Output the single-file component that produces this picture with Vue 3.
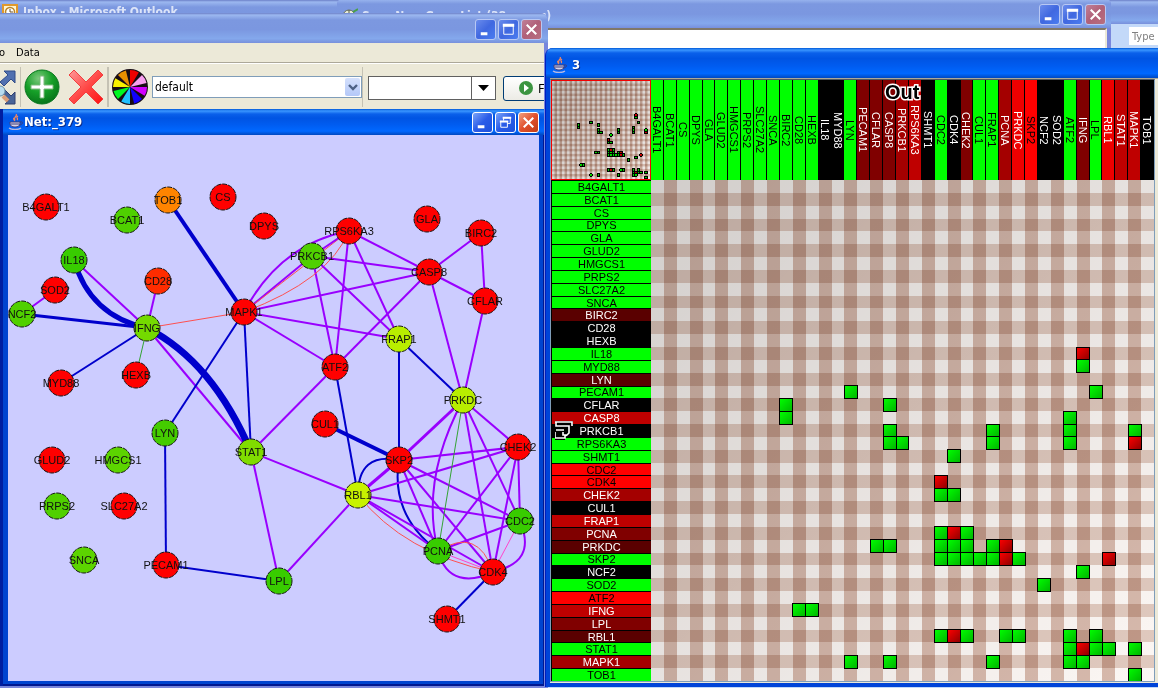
<script setup>
const genes = [
  'B4GALT1', 'BCAT1', 'CS', 'DPYS', 'GLA', 'GLUD2', 'HMGCS1', 'PRPS2', 'SLC27A2', 'SNCA',
  'BIRC2', 'CD28', 'HEXB', 'IL18', 'MYD88', 'LYN', 'PECAM1', 'CFLAR', 'CASP8', 'PRKCB1',
  'RPS6KA3', 'SHMT1', 'CDC2', 'CDK4', 'CHEK2', 'CUL1', 'FRAP1', 'PCNA', 'PRKDC', 'SKP2',
  'NCF2', 'SOD2', 'ATF2', 'IFNG', 'LPL', 'RBL1', 'STAT1', 'MAPK1', 'TOB1'
]

// Expression levels: g = up, k = none, 1..5 = increasing red, r = full red
const rowLevels = 'ggggggggggBkkggBgk4kggrr3k42BgkgrA2Bg3g'
const colLevels = 'gggggggggggggkkg22234kgk2gg35rkkg2g544k'
const tones = {
  g: '#00ff00', k: '#000000', B: '#5a0000', 2: '#800000', 3: '#a40000',
  4: '#bf0000', A: '#bf0000', 5: '#ee0000', r: '#ff0000'
}
const toLabel = (levels) => genes.map((name, i) => ({
  name,
  bg: tones[levels[i]],
  fg: levels[i] === 'g' || levels[i] === 'r' ? '#000' : '#fff'
}))
const rows = toLabel(rowLevels)
const cols = toLabel(colLevels)

// Row index -> columns; a negative number marks a red cell
const matrix = {
  13: [-33], 14: [33], 16: [15, 34], 17: [10, 18], 18: [10, 32], 19: [18, 26, 32, 37],
  20: [18, 19, 26, 32, -37], 21: [23], 23: [-22], 24: [22, 23], 27: [22, -23, 24],
  28: [17, 18, 22, 23, 24, 26, -27], 29: [22, 23, 24, 25, 26, -27, 28, -35], 30: [33],
  31: [30], 33: [11, 12], 35: [22, -23, 24, 27, 28, 32, 34], 36: [32, -33, 34, 35, 37],
  37: [15, 18, 26, 32, 33], 38: [37]
}
const cells = Object.entries(matrix).flatMap(([r, list]) =>
  list.map((c) => ({ x: Math.abs(c), y: Number(r), red: c < 0 }))
)
const odd = Array.from({ length: 19 }, (_, i) => i * 2 + 1)

const R = '#ff0000'
const nodes = {
  B4GALT1: [46, 207, R], BCAT1: [127, 220, '#4fd000'], TOB1: [168, 200, '#ff8400'],
  CS: [223, 197, R], DPYS: [264, 226, R], IL18: [74, 260, '#38cc00'],
  CD28: [158, 281, '#ff2c00'], SOD2: [55, 290, R], NCF2: [22, 314, '#50d000'],
  IFNG: [147, 328, '#74da00'], MAPK1: [244, 312, R], HEXB: [136, 375, R],
  MYD88: [61, 383, R], RPS6KA3: [349, 231, R], PRKCB1: [312, 256, '#50d000'],
  GLA: [427, 219, R], BIRC2: [481, 233, R], CASP8: [429, 272, R], CFLAR: [485, 301, R],
  FRAP1: [399, 339, '#b8ee00'], ATF2: [335, 367, R], PRKDC: [463, 400, '#b8ee00'],
  CUL1: [325, 424, R], SKP2: [399, 460, R], CHEK2: [518, 447, R],
  RBL1: [358, 495, '#c8f200'], CDC2: [520, 521, '#38cc00'], PCNA: [438, 551, '#38cc00'],
  CDK4: [493, 572, R], SHMT1: [447, 619, R], LYN: [165, 433, '#44cc00'],
  STAT1: [251, 452, '#80dc00'], GLUD2: [52, 460, R], HMGCS1: [118, 460, '#5cd400'],
  PRPS2: [57, 506, '#50d000'], SLC27A2: [124, 506, R], SNCA: [84, 560, '#5cd400'],
  PECAM1: [166, 565, R], LPL: [279, 581, '#38cc00']
}
const ink = { p: '#9900ff', b: '#0000cc', r: '#ff5050', g: '#33a333', m: '#ff44cc' }
// from, to, ink, width, optional control points of a curve
const links = [
  ['TOB1', 'MAPK1', 'b', 4], ['IL18', 'IFNG', 'p', 2], ['IL18', 'IFNG', 'b', 5, 'Q 90 316'],
  ['NCF2', 'SOD2', 'p', 2], ['NCF2', 'IFNG', 'b', 3], ['CD28', 'IFNG', 'p', 2],
  ['IFNG', 'MAPK1', 'r', 1], ['IFNG', 'HEXB', 'g', 1], ['MYD88', 'IFNG', 'b', 2],
  ['IFNG', 'STAT1', 'p', 2], ['IFNG', 'STAT1', 'b', 7, 'Q 213 362'],
  ['MAPK1', 'LYN', 'b', 2], ['MAPK1', 'STAT1', 'b', 2], ['LYN', 'PECAM1', 'b', 2],
  ['PECAM1', 'LPL', 'b', 2], ['STAT1', 'LPL', 'p', 2], ['STAT1', 'ATF2', 'p', 2],
  ['STAT1', 'RBL1', 'p', 2], ['RBL1', 'LPL', 'p', 2], ['RBL1', 'ATF2', 'b', 2],
  ['ATF2', 'MAPK1', 'p', 2], ['ATF2', 'PRKCB1', 'p', 2], ['ATF2', 'RPS6KA3', 'p', 2],
  ['ATF2', 'CASP8', 'p', 2], ['MAPK1', 'CASP8', 'p', 2], ['MAPK1', 'FRAP1', 'p', 2],
  ['MAPK1', 'PRKCB1', 'p', 2], ['RPS6KA3', 'MAPK1', 'p', 2, 'Q 280 244'],
  ['MAPK1', 'RPS6KA3', 'r', 1], ['MAPK1', 'RPS6KA3', 'r', 1, 'Q 329 280'],
  ['PRKCB1', 'RPS6KA3', 'p', 2], ['PRKCB1', 'CASP8', 'p', 2], ['PRKCB1', 'FRAP1', 'p', 2],
  ['RPS6KA3', 'CASP8', 'p', 2], ['RPS6KA3', 'FRAP1', 'p', 2], ['CASP8', 'BIRC2', 'p', 2],
  ['CASP8', 'CFLAR', 'p', 2], ['BIRC2', 'CFLAR', 'p', 2], ['CASP8', 'PRKDC', 'p', 2],
  ['CFLAR', 'PRKDC', 'p', 2], ['FRAP1', 'PRKDC', 'b', 2], ['FRAP1', 'SKP2', 'b', 2],
  ['CUL1', 'SKP2', 'b', 4], ['SKP2', 'PRKDC', 'p', 3], ['SKP2', 'RBL1', 'p', 3],
  ['SKP2', 'RBL1', 'b', 2, 'Q 358 452'], ['SKP2', 'PCNA', 'b', 2, 'Q 390 515'],
  ['SKP2', 'CHEK2', 'p', 2], ['SKP2', 'CDC2', 'p', 2], ['SKP2', 'CDK4', 'p', 2],
  ['SKP2', 'PCNA', 'p', 2], ['RBL1', 'CHEK2', 'p', 2], ['RBL1', 'CDC2', 'p', 2],
  ['RBL1', 'PCNA', 'p', 2], ['RBL1', 'CDK4', 'p', 2], ['RBL1', 'CDK4', 'r', 1, 'Q 404 553'],
  ['PRKDC', 'CHEK2', 'p', 2], ['PRKDC', 'CDC2', 'p', 2], ['PRKDC', 'CDK4', 'p', 2],
  ['PRKDC', 'PCNA', 'g', 1], ['PRKDC', 'PCNA', 'p', 2, 'Q 420 480'],
  ['CHEK2', 'PCNA', 'p', 2], ['CHEK2', 'CDK4', 'p', 2], ['CHEK2', 'CDC2', 'p', 2],
  ['PCNA', 'CDC2', 'p', 2], ['PCNA', 'CDK4', 'm', 1],
  ['PCNA', 'CDK4', 'p', 2, 'C 446 582 470 583'], ['PCNA', 'CDK4', 'r', 1, 'Q 478 526'],
  ['CDC2', 'CDK4', 'm', 1], ['CDC2', 'CDK4', 'p', 2, 'C 532 550 522 565'],
  ['CDK4', 'SHMT1', 'b', 2]
]
const edges = links.map(([a, b, tone, width, bend]) => ({
  d: `M ${nodes[a][0]} ${nodes[a][1]} ${bend || 'L'} ${nodes[b][0]} ${nodes[b][1]}`,
  stroke: ink[tone],
  width
}))

const hues = ['#f00000', '#f8a0f0', '#d000ff', '#1000ff', '#20c0ff', '#00f820', '#f8f000', '#e89000']
const wedges = hues.map((fill, i) => {
  const at = (deg) => {
    const t = (deg * Math.PI) / 180
    return `${(18 + 17 * Math.sin(t)).toFixed(1)} ${(18 - 17 * Math.cos(t)).toFixed(1)}`
  }
  const start = i * 45
  return { fill, d: `M18 18 L${at(start)} A17 17 0 0 1 ${at(start + 31)} Z` }
})
</script>

<template>
  <main class="desktop">
    <svg class="defs" width="0" height="0" aria-hidden="true">
      <defs>
        <linearGradient id="shade" x1="0" y1="0" x2="1" y2="1">
          <stop offset="0" stop-color="#000" stop-opacity="0.17" />
          <stop offset="1" stop-color="#000" stop-opacity="0" />
        </linearGradient>
        <linearGradient id="up" x1="0" y1="0" x2="1" y2="1">
          <stop offset="0" stop-color="#00ff00" /><stop offset="1" stop-color="#00b400" />
        </linearGradient>
        <linearGradient id="down" x1="0" y1="0" x2="1" y2="1">
          <stop offset="0" stop-color="#ff0000" /><stop offset="1" stop-color="#8c0000" />
        </linearGradient>
        <radialGradient id="orb" cx="0.4" cy="0.25" r="0.8">
          <stop offset="0" stop-color="#7cc87c" /><stop offset="0.5" stop-color="#16a028" /><stop offset="1" stop-color="#067018" />
        </radialGradient>
        <linearGradient id="cross" x1="0" y1="0" x2="1" y2="1">
          <stop offset="0" stop-color="#ff9a9a" /><stop offset="0.5" stop-color="#ff4a48" /><stop offset="1" stop-color="#ff1010" />
        </linearGradient>
        <symbol id="java" viewBox="0 0 16 16">
          <path d="M8 0c2 2-3 3-1 6M10 2c-3 2 1 2-1 4M6 4c-1 1 0 2 1 3" fill="none" stroke="#f08860" stroke-width="1.2" />
          <path d="M2 8h10v1c0 3-2 4-5 4S2 12 2 9z" fill="#d8d4e8" stroke="#3c3c7c" />
          <path d="M3 10h8M12 8c4-1 3 3-1 3" fill="none" stroke="#3c3c7c" />
          <path d="M1 14c3 2 9 2 12 0" fill="none" stroke="#b8b8e0" stroke-width="1.4" />
        </symbol>
        <symbol id="w-min" viewBox="0 0 20 20"><path d="M5 13h7v3H5z" fill="#fff" /></symbol>
        <symbol id="w-max" viewBox="0 0 20 20">
          <path d="M5 6h10v9H5z" fill="none" stroke="#fff" /><path d="M4 4h12v3H4z" fill="#fff" />
        </symbol>
        <symbol id="w-restore" viewBox="0 0 20 20">
          <path d="M8 8V5h7v6h-3M5 9h7v6H5z" fill="none" stroke="#fff" /><path d="M7 4h9v2H7zM4 8h9v2H4z" fill="#fff" />
        </symbol>
        <symbol id="w-close" viewBox="0 0 20 20"><path d="M5 5l10 10M15 5L5 15" stroke="#fff" stroke-width="2.2" /></symbol>
        <g id="gingham">
          <rect width="39" height="39" fill="#fcf7f4" />
          <rect v-for="i in odd" :key="'c' + i" class="mul" :x="i" width="1" height="39" fill="#dabfb4" />
          <rect v-for="i in odd" :key="'r' + i" class="mul" :y="i" width="39" height="1" fill="#e4d1c8" />
          <rect width="39" height="39" fill="url(#shade)" />
          <rect
            v-for="c in cells" :key="c.x + '-' + c.y" class="cell" :x="c.x" :y="c.y" width="1" height="1"
            :fill="c.red ? 'url(#down)' : 'url(#up)'"
          />
        </g>
      </defs>
    </svg>

    <!-- Mail window, furthest back -->
    <section class="win mail">
      <header class="bar faded mail-bar">
        <svg class="ico" viewBox="0 0 16 16">
          <rect x="1" y="1" width="14" height="14" fill="#fff4d0" stroke="#e0992c" stroke-width="2" />
          <circle cx="8" cy="8" r="4.5" fill="#fff" stroke="#b88428" stroke-width="1.5" /><path d="M8 5v3h3" fill="none" stroke="#705020" />
        </svg>
        <h2 class="cap small">Inbox - Microsoft Outlook</h2>
      </header>
      <div class="mail-tools"><input class="ask" type="text" placeholder="Type a question" aria-label="Type a question" /></div>
    </section>

    <!-- Gene list window -->
    <section class="win list">
      <header class="bar faded list-bar">
        <div class="name">
          <svg class="ico" viewBox="0 0 16 16">
            <circle cx="7" cy="8" r="6" fill="#e8ecd8" stroke="#687058" /><path d="M3 6h8M7 2v11M3 10h8" stroke="#505848" fill="none" /><path d="M11 4l5-3" stroke="#48a048" stroke-width="2" />
          </svg>
          <h2 class="cap small">Save New Gene List (38 genes)</h2>
        </div>
        <div class="keys">
          <button class="key dim" aria-label="Minimize"><svg viewBox="0 0 20 20"><use href="#w-min" /></svg></button>
          <button class="key dim" aria-label="Maximize"><svg viewBox="0 0 20 20"><use href="#w-max" /></svg></button>
          <button class="key dim shut" aria-label="Close"><svg viewBox="0 0 20 20"><use href="#w-close" /></svg></button>
        </div>
      </header>
      <div class="list-body"></div>
    </section>

    <!-- Network application -->
    <section class="win app">
      <header class="bar faded app-bar">
        <div class="keys">
          <button class="key dim" aria-label="Minimize"><svg viewBox="0 0 20 20"><use href="#w-min" /></svg></button>
          <button class="key dim" aria-label="Maximize"><svg viewBox="0 0 20 20"><use href="#w-max" /></svg></button>
          <button class="key dim shut" aria-label="Close"><svg viewBox="0 0 20 20"><use href="#w-close" /></svg></button>
        </div>
      </header>
      <nav class="menu"><button>o</button><button>Data</button></nav>
      <div class="tools">
        <button class="tool zoomer" aria-label="Zoom to fit">
          <svg width="16" height="36" viewBox="0 0 16 36">
            <path d="M4 2h11v12l-4-4-7 7-4-4 8-7z" fill="#5070b0" stroke="#304c88" />
            <path d="M15 35H5l4-4-9-9 3-3 8 8 4-4z" fill="#486498" stroke="#304070" />
            <circle cx="0" cy="22" r="5" fill="#b8dcf0" stroke="#6c90a8" /><path d="M3 27l5 5" stroke="#d89c78" stroke-width="4" />
          </svg>
        </button>
        <i class="rule"></i>
        <button class="tool" aria-label="Add">
          <svg width="36" height="36" viewBox="0 0 36 36">
            <circle cx="18" cy="18" r="17" fill="url(#orb)" stroke="#0a7820" />
            <path d="M16 7h4v9h9v4h-9v9h-4v-9H7v-4h9z" fill="#fff" stroke="#78b878" />
          </svg>
        </button>
        <button class="tool" aria-label="Delete">
          <svg width="36" height="36" viewBox="0 0 36 36">
            <path d="M6 1l12 12L30 1l5 5-12 12 12 12-5 5-12-12L6 35l-5-5 12-12L1 6z" fill="url(#cross)" stroke="#f04040" />
          </svg>
        </button>
        <i class="rule thick"></i>
        <button class="tool" aria-label="Colours">
          <svg width="36" height="36" viewBox="0 0 36 36">
            <circle cx="18" cy="18" r="18" fill="#180c14" />
            <path v-for="w in wedges" :key="w.fill" :d="w.d" :fill="w.fill" />
          </svg>
        </button>
        <div class="pick">
          <select aria-label="Visual style"><option>default</option></select>
          <svg class="drop" viewBox="0 0 15 18"><path d="M4 7l4 4 4-4" fill="none" stroke="#4d6185" stroke-width="2.4" /></svg>
        </div>
        <i class="rule"></i>
        <div class="combo">
          <input type="text" aria-label="Search" />
          <button aria-label="Show choices"><svg width="11" height="6" viewBox="0 0 11 6"><path d="M0 0h11L5.500 6z" /></svg></button>
        </div>
        <button class="find">
          <svg width="14" height="14" viewBox="0 0 14 14"><circle cx="7" cy="7" r="7" fill="#3c9440" /><path d="M5 3l5 4-5 4z" fill="#fff" /></svg>
          Find
        </button>
      </div>

      <section class="net">
        <header class="bar live net-bar">
          <svg class="ico"><use href="#java" /></svg>
          <h2 class="cap">Net:_379</h2>
          <div class="keys">
            <button class="key" aria-label="Minimize"><svg viewBox="0 0 20 20"><use href="#w-min" /></svg></button>
            <button class="key" aria-label="Restore"><svg viewBox="0 0 20 20"><use href="#w-restore" /></svg></button>
            <button class="key shut" aria-label="Close"><svg viewBox="0 0 20 20"><use href="#w-close" /></svg></button>
          </div>
        </header>
        <svg class="graph" viewBox="8 135 531 546" preserveAspectRatio="xMinYMin meet">
          <path v-for="(e, i) in edges" :key="i" :d="e.d" :stroke="e.stroke" :stroke-width="e.width" fill="none" />
          <g v-for="(n, name) in nodes" :key="name">
            <circle :cx="n[0]" :cy="n[1]" r="13" :fill="n[2]" class="rim" />
            <text :x="n[0]" :y="n[1] + 4">{{ name }}</text>
          </g>
        </svg>
      </section>
    </section>

    <!-- Matrix window -->
    <section class="win heat">
      <header class="bar live heat-bar">
        <svg class="ico"><use href="#java" /></svg>
        <h2 class="cap">3</h2>
      </header>
      <div class="heat-body">
        <div class="board">
          <svg class="mini" viewBox="0 0 39 39" preserveAspectRatio="none"><use href="#gingham" /></svg>
          <ul class="cols">
            <li v-for="c in cols" :key="c.name" :style="{ background: c.bg, color: c.fg }">{{ c.name }}</li>
          </ul>
          <ul class="rows">
            <li v-for="r in rows" :key="r.name" :style="{ background: r.bg, color: r.fg }">{{ r.name }}</li>
          </ul>
          <svg class="map" viewBox="0 0 39 39" preserveAspectRatio="none"><use href="#gingham" /></svg>
          <span class="out">Out</span>
          <svg class="in" viewBox="0 0 18 19" role="img" aria-label="In">
            <path d="M0 0h18v5h-3v10H10v4H0z" fill="#000" />
            <path d="M0 1h17v4M1 1v4h13v7l-2 2H8v-3M1 9h8M0 11v6h10v-2l2-1" fill="none" stroke="#fff" stroke-width="1.6" />
          </svg>
        </div>
      </div>
    </section>
  </main>
</template>

<style>
html, body { margin: 0; background: #ece9d8; overflow: hidden; }
</style>

<style scoped>
.desktop {
  position: relative;
  height: 100vh;
  overflow: hidden;
  font-family: "DejaVu Sans Condensed", "DejaVu Sans", sans-serif;
  font-stretch: condensed;
  font-size: 11px;
}
.desktop * { box-sizing: border-box; }
.defs { position: absolute; }
button, input, select { font: inherit; margin: 0; }
.win { position: absolute; display: flex; flex-direction: column; overflow: hidden; }
.bar { display: flex; align-items: center; flex: none; }
.faded { background: linear-gradient(#6c80c8 0, #9cb8f0 2px, #7c98e0 7px, #7b97e0 55%, #84a8ec 85%, #7890dc); }
.live { background: linear-gradient(#0058d8 0, #3a96ff 2px, #0a60ea 5px, #0054e3 35%, #005cf0 60%, #0068ff 85%, #0048c0); }
.ico { width: 16px; height: 16px; flex: none; }
.cap { margin: 0; font-size: 13px; font-weight: 700; line-height: 16px; color: #fff; white-space: nowrap; text-shadow: 1px 1px #0a2c8c; }
.small { font-size: 12px; color: #dce4f8; text-shadow: none; }
.keys { display: flex; gap: 2px; margin-left: auto; }
.key {
  width: 21px; height: 21px; padding: 0; display: flex;
  border: 1px solid #fff; border-radius: 3px;
  background: linear-gradient(135deg, #7ba4f8, #2a5ce8 50%, #1c50dc);
}
.key svg { flex: 1; }
.shut { background: linear-gradient(135deg, #f0a080, #e0502c 50%, #c03c18); }
.dim { border-color: #b8c8f4; background: linear-gradient(135deg, #6a8cec, #4068e0 50%, #4a7cf0); }
.dim.shut { background: linear-gradient(135deg, #c08098, #b06078 50%, #b87080); }

.mail { inset: 0; background: #c3d9f9; }
.mail-bar { height: 24px; padding: 0 2px; gap: 5px; }
.mail-tools { padding: 3px 0; display: flex; justify-content: flex-end; }
.ask { width: 29px; height: 18px; border: 0; padding: 0 0 0 3px; background: #fff; }
.ask::placeholder { color: #808080; opacity: 1; }

.list { left: 337px; right: 47px; top: -3px; height: 120px; border-radius: 8px 8px 0 0; background: #7886dc; padding-right: 4px; }
.list-bar { height: 31px; padding: 4px 5px 0; margin-right: -4px; }
.name { display: flex; align-items: center; gap: 4px; padding-top: 2px; }
.list-body { flex: 1; background: #fff; border-top: 2px solid #807868; border-right: 2px solid #ece9d8; }

.app { left: 0; top: 13px; bottom: 0; width: 548px; border-radius: 0 8px 0 0; background: #7886dc; padding-right: 4px; }
.app-bar { height: 30px; margin-right: -4px; padding: 2px 6px 0 0; }
.menu { display: flex; gap: 11px; height: 20px; flex: none; background: #ece9d8; border-bottom: 1px solid #aca899; }
.menu button { border: 0; padding: 0; background: none; color: #000; line-height: 18px; }
.menu button:first-child { margin-left: -1px; }
.tools { display: flex; align-items: center; height: 46px; flex: none; background: #ece9d8; border-top: 1px solid #fff; overflow: hidden; }
.tool { border: 0; padding: 0; background: none; display: flex; flex: none; margin-right: 6px; }
.tool + .tool { margin-left: 2px; }
.zoomer { margin-right: 4px; }
.rule { width: 1px; height: 40px; flex: none; background: #c5c2b4; margin-right: 3px; }
.thick { width: 2px; margin: 0 3px 0 -3px; }
.thick + .tool { margin-right: 4px; }
.pick { position: relative; width: 210px; height: 22px; flex: none; }
.pick select { appearance: none; width: 100%; height: 22px; padding: 0 0 0 2px; border: 1px solid #7f9db9; border-radius: 0; background: #fff; color: #000; font-size: 12px; }
.drop { position: absolute; right: 2px; top: 2px; width: 15px; height: 18px; background: linear-gradient(#d4e0fc, #b4c8f8); border-radius: 2px; pointer-events: none; }
.combo { display: flex; width: 128px; height: 24px; flex: none; border: 1px solid #606060; background: #fff; margin: 3px 7px 0 2px; }
.combo input { flex: 1; min-width: 0; border: 0; padding: 0 2px; background: none; }
.combo button { width: 24px; border: 0; border-left: 1px solid #606060; padding: 0; background: #fff; display: flex; align-items: center; justify-content: center; }
.find { display: flex; align-items: center; gap: 5px; height: 25px; width: 90px; flex: none; margin-top: 3px; padding: 0 0 0 15px; border: 1px solid #003c74; border-radius: 3px; background: linear-gradient(#fff, #ecebe5); color: #000; font-size: 13px; }

.net { flex: 1; min-height: 0; display: flex; flex-direction: column; background: #0044d0; margin-bottom: 2px; padding: 0 5px 5px 5px; border-left: 3px solid #001ea0; box-shadow: inset 0 -2px #001890, inset -1px 0 #001890; }
.net-bar { height: 26px; margin: 0 -5px; padding: 0 5px 0 5px; }
.graph { flex: 1; min-height: 0; width: 100%; background: #ccccff; }
.graph text { font-family: "Liberation Sans", Arial, sans-serif; font-size: 11px; text-anchor: middle; fill: #101010; }
.rim { stroke: #181818; stroke-width: 1; stroke-dasharray: 5 1; }

.heat { left: 545px; right: -5px; top: 48px; bottom: 1px; border-radius: 8px 0 0 0; background: #0044d8; padding: 0 5px 4px; border-left: 1px solid #001ec0; }
.heat-bar { height: 30px; margin: 0 -5px; padding: 3px 6px 0; gap: 4px; }
.heat-body { flex: 1; min-height: 0; background: #ece9d8; padding: 0 3px 1px 0; border-top: 1px solid #aca899; display: flex; margin-left: -1px; }
.board { position: relative; flex: 1; min-height: 0; display: grid; grid-template: 100px minmax(0, 1fr) / 100px minmax(0, 1fr); border: 1px solid #7f9db9; border-top-color: #505860; background: #000; }
.mini { width: 100%; height: 100%; border: 1px solid #ff0000; filter: brightness(0.9) contrast(1.15); }
.map { width: 100%; height: 100%; shape-rendering: crispEdges; }
.mul { mix-blend-mode: multiply; }
.cell { stroke: #000; stroke-width: 1px; vector-effect: non-scaling-stroke; shape-rendering: crispEdges; }
.cols, .rows { list-style: none; margin: 0; padding: 0; display: grid; background: #000; font-family: "Liberation Sans", Arial, sans-serif; font-size: 11px; line-height: 12px; }
.cols { grid-template-columns: repeat(39, minmax(0, 1fr)); }
.cols li { writing-mode: vertical-rl; display: flex; align-items: center; justify-content: center; border-right: 1px solid #000; min-width: 0; }
.rows { grid-template-rows: repeat(39, minmax(0, 1fr)); min-height: 0; border-left: 1px solid #000; }
.rows li { display: flex; align-items: center; justify-content: center; border-top: 1px solid #000; min-height: 0; }
.out { position: absolute; left: 334px; top: 1px; font: 700 20px/22px "Liberation Sans", sans-serif; color: #000; -webkit-text-stroke: 3px #fff; paint-order: stroke fill; }
.in { position: absolute; left: 4px; top: 341px; width: 18px; height: 19px; }
</style>
